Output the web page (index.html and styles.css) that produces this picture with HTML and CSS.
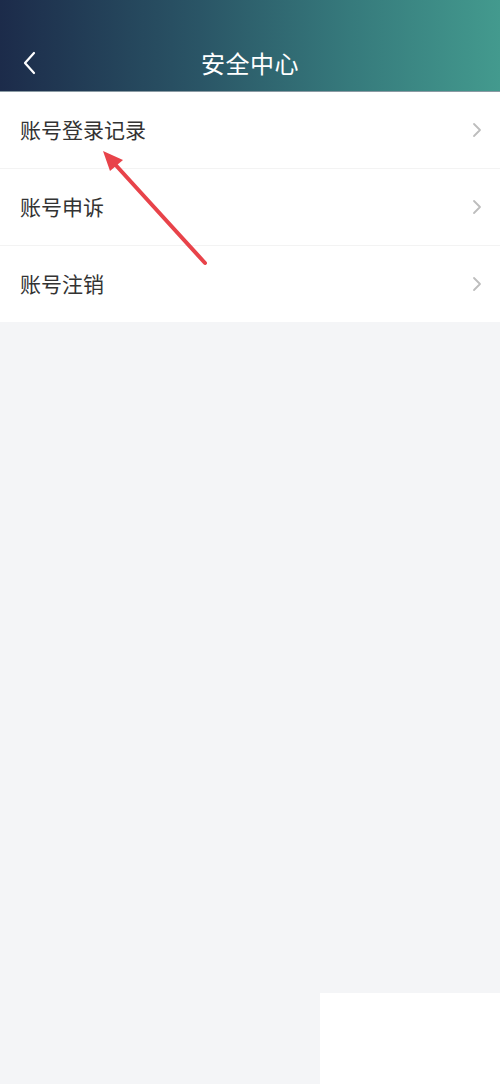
FILE: index.html
```html
<!DOCTYPE html>
<html lang="zh-CN">
<head>
    <meta charset="UTF-8">
    <meta name="viewport" content="width=device-width, initial-scale=1.0">
    <title>安全中心</title>
    <link rel="stylesheet" href="styles.css">
</head>
<body>
    <header class="topbar">
        <a class="back" href="#">
            <svg width="14" height="24" viewBox="0 0 14 24"><path d="M12 2 L3 12 L12 22" fill="none" stroke="#ffffff" stroke-width="2.2" stroke-linecap="round" stroke-linejoin="round"/></svg>
        </a>
        <h1>安全中心</h1>
    </header>

    <ul class="menu">
        <li><a href="#"><span>账号登录记录</span><svg class="chev" width="10" height="16" viewBox="0 0 10 16"><path d="M2 2 L8 8 L2 14" fill="none" stroke="#bdbdbd" stroke-width="1.8" stroke-linecap="round" stroke-linejoin="round"/></svg></a></li>
        <li><a href="#"><span>账号申诉</span><svg class="chev" width="10" height="16" viewBox="0 0 10 16"><path d="M2 2 L8 8 L2 14" fill="none" stroke="#bdbdbd" stroke-width="1.8" stroke-linecap="round" stroke-linejoin="round"/></svg></a></li>
        <li><a href="#"><span>账号注销</span><svg class="chev" width="10" height="16" viewBox="0 0 10 16"><path d="M2 2 L8 8 L2 14" fill="none" stroke="#bdbdbd" stroke-width="1.8" stroke-linecap="round" stroke-linejoin="round"/></svg></a></li>
    </ul>

    <div class="spacer"></div>
    <div class="footer-row">
        <div class="footer-gap"></div>
        <div class="footer-card"></div>
    </div>

    <!-- annotation arrow over the list -->
    <svg class="arrow" width="500" height="300" viewBox="0 0 500 300">
        <line x1="205" y1="263" x2="112" y2="161" stroke="#e8434a" stroke-width="4" stroke-linecap="round"/>
        <polygon points="103,151 123,160 110,171" fill="#e8434a"/>
    </svg>
</body>
</html>
```

FILE: styles.css
```css
body {
    font-family: "Noto Sans CJK SC", "Noto Sans", sans-serif;
    margin: 0;
    padding: 0;
    background-color: #f4f5f7;
    height: 1084px;
    display: flex;
    flex-direction: column;
    overflow: hidden;
}

.topbar {
    height: 91px;
    border-bottom: 1px solid #8a9aa3;
    background: linear-gradient(90deg, #1c2b4a 0%, #2a5566 40%, #367a7c 70%, #439a8e 100%);
    display: flex;
    align-items: center;
    justify-content: center;
    padding-top: 35px;
    box-sizing: content-box;
    height: 56px;
    position: relative;
}

.topbar h1 {
    margin: 0;
    color: #fff;
    font-size: 24px;
    font-weight: 400;
    line-height: 32px;
    letter-spacing: 0.5px;
}

.back {
    position: absolute;
    left: 22px;
    top: 51px;
    display: block;
}

.menu {
    list-style-type: none;
    margin: 0;
    padding: 0;
    background-color: #fff;
}

.menu li a {
    height: 77px;
    display: flex;
    align-items: center;
    justify-content: space-between;
    padding: 0 18px 0 20px;
    text-decoration: none;
    color: #333;
    font-size: 21px;
    border-bottom: 1px solid #f3f3f3;
    box-sizing: border-box;
}

.menu li:last-child a {
    border-bottom: none;
    height: 76px;
}

.menu li a span {
    margin-top: -2px;
}

.spacer {
    flex: 1;
}

.footer-row {
    height: 91px;
    display: flex;
}

.footer-gap {
    width: 320px;
}

.footer-card {
    flex: 1;
    background-color: #fff;
}

.arrow {
    position: absolute;
    left: 0;
    top: 0;
    pointer-events: none;
}
```
